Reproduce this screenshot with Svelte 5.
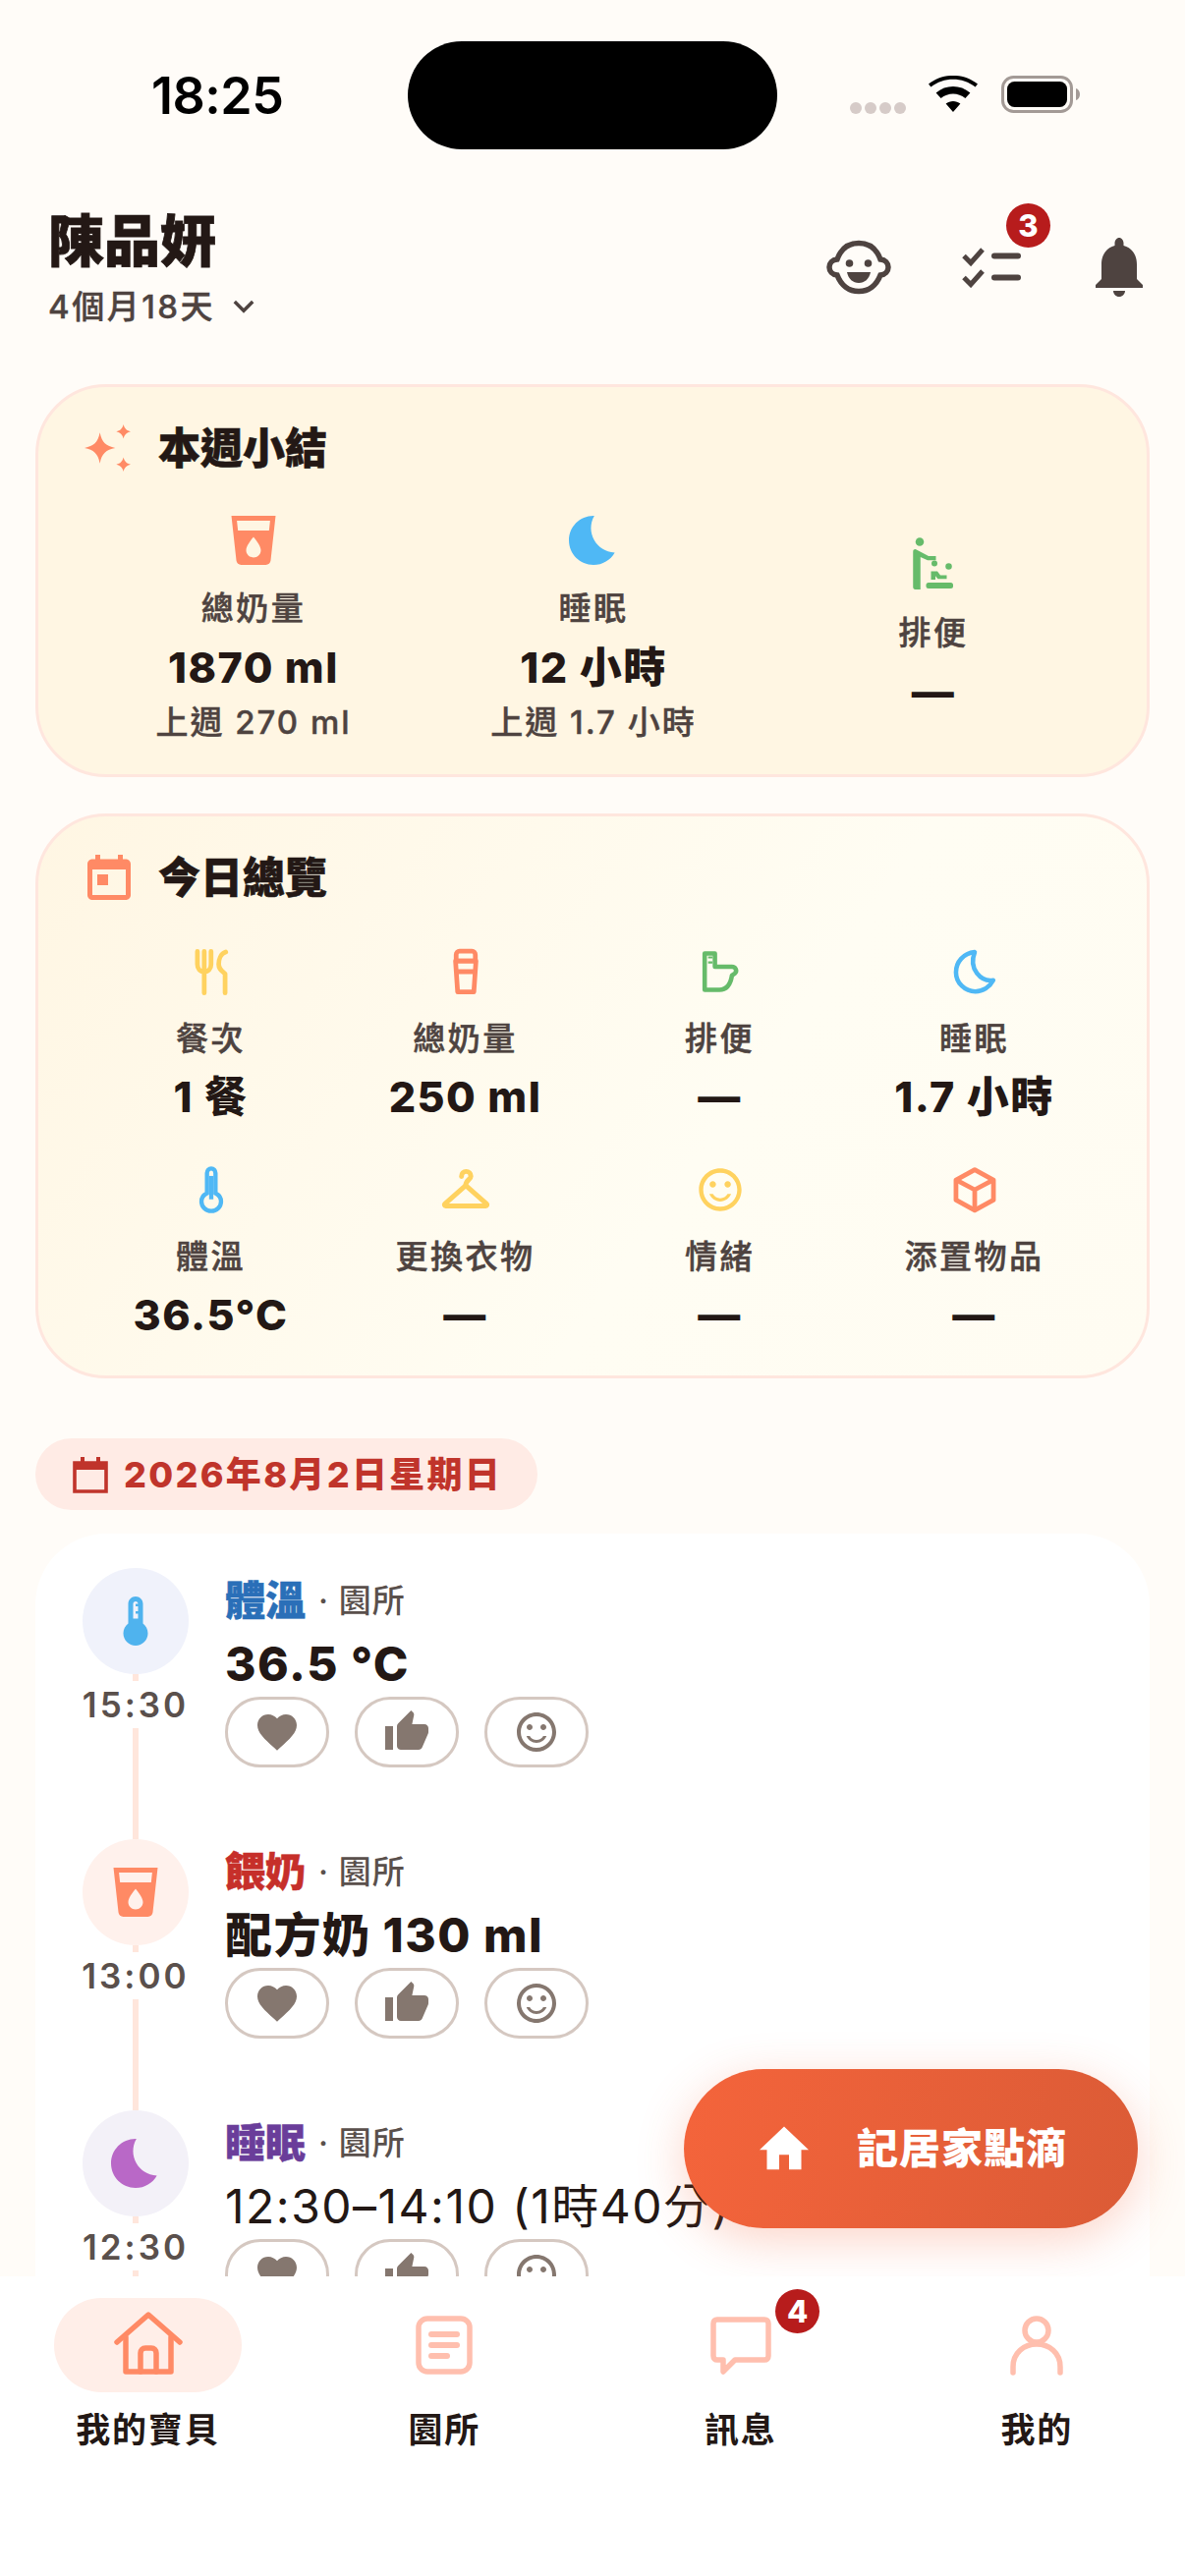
<script>
  const icons = {
    drink: 'M3 2l2.01 18.23C5.13 21.23 5.97 22 7 22h10c1.03 0 1.87-.77 1.99-1.77L21 2H3zm9 17c-1.66 0-3-1.34-3-3 0-2 3-5.4 3-5.4s3 3.4 3 5.4c0 1.66-1.34 3-3 3zm6.33-11H5.67l-.44-4h13.53l-.43 4z',
    moon: 'M12.34 2.02C6.59 1.82 2 6.42 2 12c0 5.52 4.48 10 10 10 3.71 0 6.93-2.02 8.66-5.02-7.51-.25-12.09-8.43-8.32-14.96z',
    thermo: 'M15 13V5c0-1.66-1.34-3-3-3S9 3.34 9 5v8c-1.21.91-2 2.37-2 4 0 2.76 2.24 5 5 5s5-2.24 5-5c0-1.63-.79-3.09-2-4zm-4-8c0-.55.45-1 1-1s1 .45 1 1h-1v1h1v2h-1v1h1v2h-2V5z',
    heart: 'M12 21.35l-1.45-1.32C5.4 15.36 2 12.28 2 8.5 2 5.42 4.42 3 7.5 3c1.74 0 3.41.81 4.5 2.09C13.09 3.81 14.76 3 16.5 3 19.58 3 22 5.42 22 8.5c0 3.78-3.4 6.86-8.55 11.54L12 21.35z',
    thumb: 'M1 21h4V9H1v12zm22-11c0-1.1-.9-2-2-2h-6.31l.95-4.57.03-.32c0-.41-.17-.79-.44-1.06L14.17 1 7.59 7.59C7.22 7.95 7 8.45 7 9v10c0 1.1.9 2 2 2h9c.83 0 1.54-.5 1.84-1.22l3.02-7.05c.09-.23.14-.47.14-.73v-2z'
  };
  const smileLine = 'M11.99 2C6.47 2 2 6.48 2 12s4.47 10 9.99 10C17.52 22 22 17.52 22 12S17.52 2 11.99 2zM12 20c-4.42 0-8-3.58-8-8s3.58-8 8-8 8 3.58 8 8-3.58 8-8 8zm3.5-9c.83 0 1.5-.67 1.5-1.5S16.33 8 15.5 8 14 8.67 14 9.5s.67 1.5 1.5 1.5zm-7 0c.83 0 1.5-.67 1.5-1.5S9.33 8 8.5 8 7 8.67 7 9.5 7.67 11 8.5 11zM12 16c-1.48 0-2.75-.81-3.45-2H6.88c.8 2.05 2.79 3.5 5.12 3.5s4.32-1.45 5.12-3.5h-1.67c-.7 1.19-1.97 2-3.45 2z';

  const weekly = [
    { icon: 'drink', color: '#ff8a65', label: '總奶量', value: '1870 ml', sub: '上週 270 ml' },
    { icon: 'moon', color: '#4fb8f5', label: '睡眠', value: '12 小時', sub: '上週 1.7 小時' },
    { icon: 'baby', color: '#66bb6a', label: '排便', value: '—' }
  ];
  const today = [
    { icon: 'fork', color: '#ffd25f', label: '餐次', value: '1 餐' },
    { icon: 'cup', color: '#ff8a65', label: '總奶量', value: '250 ml' },
    { icon: 'potty', color: '#66bb6a', label: '排便', value: '—' },
    { icon: 'moonline', color: '#4fb8f5', label: '睡眠', value: '1.7 小時' },
    { icon: 'therline', color: '#4fb8f5', label: '體溫', value: '36.5°C' },
    { icon: 'hanger', color: '#ffd25f', label: '更換衣物', value: '—' },
    { icon: 'mood', color: '#ffd25f', label: '情緒', value: '—' },
    { icon: 'box', color: '#ff8a65', label: '添置物品', value: '—' }
  ];
  const events = [
    { icon: 'thermo', bg: '#f0f2fb', fg: '#4fb3ee', tone: '#2a6fb8', title: '體溫', value: '36.5 °C', time: '15:30' },
    { icon: 'drink', bg: '#fff1ec', fg: '#ff8a65', tone: '#c62f2a', title: '餵奶', value: '配方奶 130 ml', time: '13:00' },
    { icon: 'moon', bg: '#f3f1f8', fg: '#b968c7', tone: '#6a3d9a', title: '睡眠', value: '12:30–14:10 (1時40分) — 安穩入睡', time: '12:30', plain: true }
  ];
  const tabs = [
    { id: 'home', label: '我的寶貝', active: true },
    { id: 'news', label: '園所' },
    { id: 'chat', label: '訊息', badge: 4 },
    { id: 'me', label: '我的' }
  ];
</script>

{#snippet glyph(name)}
  <svg class="ic" viewBox="0 0 24 24" aria-hidden="true">
    {#if name === 'baby'}
      <g fill="currentColor">
        <circle cx="6.4" cy="2.6" r="1.7"/>
        <path d="M4.7 5.6 10 8.4h3v1.7H9.6L6.7 8.8V22H4.6c-.6 0-.9-.4-.9-1V6.6c0-.7.4-1 1-1z"/>
        <circle cx="12.4" cy="11.4" r="1.2"/><circle cx="18.2" cy="12.6" r="1.3"/>
        <path d="M11 14.6h2.6l1.2 1.6h2.6v1.5h-3.6l-1-1.2V18H11z"/>
        <rect x="9" y="19.2" width="11" height="2.4" rx="1"/>
      </g>
    {:else if name === 'fork'}
      <g fill="none" stroke="currentColor" stroke-width="2.2" stroke-linecap="round" stroke-linejoin="round">
        <path d="M5.500 2.500v6c0 2 1.200 3.500 3.200 3.500s3.200-1.500 3.200-3.500v-6M8.700 2.500V22"/>
        <path d="M18.800 2.800c-2.400.8-3.300 3.600-3.300 5.700 0 2.200 1.300 3 3 4.500V22"/>
      </g>
    {:else if name === 'cup'}
      <g fill="none" stroke="currentColor" stroke-width="2.200" stroke-linejoin="round" stroke-linecap="round">
        <path d="M7.500 7V4c0-1 .7-1.600 1.600-1.600h5.800c.9 0 1.600.6 1.600 1.600v3z"/>
        <path d="M7.200 7h9.600l-1 14.500H8.200zM7.500 12h9"/>
      </g>
    {:else if name === 'potty'}
      <g fill="none" stroke="currentColor" stroke-width="2.100" stroke-linecap="round" stroke-linejoin="round">
        <path d="M4.700 3.500h4.800v6.200h8c1.700 0 2.600 1.900 1.400 3.100l-1.400 1c-.6 4-2.400 6.700-5.900 6.700H4.700z"/>
      </g>
      <path d="M6.300 5.300h2M6.300 7.700h2" fill="none" stroke="currentColor" stroke-width="1"/>
    {:else if name === 'moonline'}
      <path d="M12 2.800C6.700 3.400 3.200 7.400 3.200 12.300c0 5 4.200 9 9.100 9 3.500 0 6.700-2 8.400-5.300-5.700.9-11.800-5.200-8.700-13.200z" fill="none" stroke="currentColor" stroke-width="2.100" stroke-linejoin="round"/>
    {:else if name === 'therline'}
      <g fill="none" stroke="currentColor" stroke-width="2">
        <path d="M10 13.600V4.200c0-1.200.9-2.200 2-2.200s2 1 2 2.200v9.400c1.500.8 2.600 2.200 2.600 3.900 0 2.500-2.100 4.500-4.600 4.500s-4.600-2-4.600-4.500c0-1.700 1.100-3.100 2.600-3.900z"/>
        <path d="M12 5.500v11"/>
      </g>
    {:else if name === 'hanger'}
      <g fill="none" stroke="currentColor" stroke-width="2.300" stroke-linecap="round" stroke-linejoin="round">
        <path d="M10 5.800c0-1.400 1-2.400 2.200-2.400s2.200 1 2.200 2.200c0 1.400-2.400 2-2.400 4.200"/>
        <path d="M12 10 2.200 18.600c-.4.4-.2 1 .4 1h18.800c.6 0 .8-.6.4-1z"/>
      </g>
    {:else if name === 'mood'}
      <path fill="currentColor" d={smileLine}/>
    {:else if name === 'box'}
      <g fill="none" stroke="currentColor" stroke-width="2.200" stroke-linejoin="round">
        <path d="M12 2.600 20.800 7.400v9.400L12 21.600 3.200 16.800V7.400z"/>
        <path d="M3.400 7.400 12 12l8.600-4.600M12 12v9.400"/>
      </g>
    {:else}
      <path fill="currentColor" d={icons[name]}/>
    {/if}
  </svg>
{/snippet}

<div class="phone">
  <div class="status">
    <span class="clock">18:25</span>
    <div class="island"></div>
    <div class="sys">
      <div class="dots"><i></i><i></i><i></i><i></i></div>
      <svg class="wifi" viewBox="0 0 50 36" aria-hidden="true">
        <path d="M25 36 17.600 27.600c4.400-3.600 10.400-3.600 14.800 0zM12.600 22l-5-5.600c10-8.600 24.800-8.600 34.800 0l-5 5.600c-7.200-6-17.600-6-24.800 0zM2.400 10.600 0 7.600C14-4 36-4 50 7.600l-2.400 3c-13-10.600-32.200-10.600-45.200 0z"/>
      </svg>
      <svg class="batt" viewBox="0 0 80 38" aria-hidden="true">
        <rect x="1.500" y="1.500" width="70" height="35" rx="11" fill="none" stroke="#a39a96" stroke-width="3"/>
        <rect x="6" y="6" width="61" height="26" rx="7.500" fill="#000"/>
        <path d="M76 13c2.600.8 4 3 4 6s-1.400 5.200-4 6z" fill="#a39a96"/>
      </svg>
    </div>
  </div>

  <div class="main">
    <header class="top">
      <div>
        <h1>陳品妍</h1>
        <div class="age">4個月18天
          <svg class="chev" viewBox="0 0 24 24" aria-hidden="true"><path d="M5.500 8.500 12 15l6.500-6.500" fill="none" stroke="currentColor" stroke-width="2.400"/></svg>
        </div>
      </div>
      <div class="actions">
        <svg class="a-face" viewBox="0 0 66 56" aria-hidden="true">
          <path fill="none" stroke="#4e4340" stroke-width="5.500" d="M11 20C15 9 23 3.500 33 3.500S51 9 55 20c5 .5 8 4 8 8s-3 7.500-8 8c-4 10.500-12 16.500-22 16.500S15 46.500 11 36c-5-.5-8-4-8-8s3-7.500 8-8z"/>
          <circle cx="23.500" cy="24" r="3.800" fill="#4e4340"/><circle cx="42.500" cy="24" r="3.800" fill="#4e4340"/>
          <path fill="#4e4340" d="M21 33h24c-1.500 7-6 11-12 11s-10.500-4-12-11z"/>
        </svg>
        <div class="a-check">
          <svg viewBox="0 0 60 42" aria-hidden="true">
            <g fill="none" stroke="#4e4340" stroke-width="5">
              <path d="M2 9.500l7 7L21 3M2 31.500l7 7L21 25"/>
            </g>
            <rect x="30" y="6.500" width="30" height="6" rx="3" fill="#4e4340"/><rect x="30" y="28.500" width="30" height="6" rx="3" fill="#4e4340"/>
          </svg>
          <span class="badge">3</span>
        </div>
        <svg class="a-bell" viewBox="0 0 48 60" aria-hidden="true">
          <path fill="#4e4340" d="M24 60c3.300 0 6-2.700 6-6H18c0 3.300 2.700 6 6 6zM42 42V27c0-9.300-5-17-13.500-19V5.500C28.500 2.500 26.500 0 24 0s-4.500 2.500-4.500 5.500V8C11 10 6 17.700 6 27v15l-6 6v3h48v-3z"/>
        </svg>
      </div>
    </header>

    <section class="card weekly">
      <div class="card-head">
        <svg class="h-ic" viewBox="0 0 46 46" aria-hidden="true">
          <g fill="#ff8a65">
            <path d="M15 8C17 18 21 21 30 23 21 25 17 28 15 38 13 28 9 25 0 23 9 21 13 18 15 8z"/>
            <path d="M38 0c1 4 3 6 7 7-4 1-6 3-7 7-1-4-3-6-7-7 4-1 6-3 7-7zM38 32c1 4 3 6 7 7-4 1-6 3-7 7-1-4-3-6-7-7 4-1 6-3 7-7z"/>
          </g>
        </svg>
        <h2>本週小結</h2>
      </div>
      <div class="w-grid">
        {#each weekly as w}
          <div class="w-col" style:color={w.color}>
            {@render glyph(w.icon)}
            <div class="lab">{w.label}</div>
            <div class="val">{w.value}</div>
            {#if w.sub}<div class="sub">{w.sub}</div>{/if}
          </div>
        {/each}
      </div>
    </section>

    <section class="card overview">
      <div class="card-head">
        <svg class="h-ic cal" viewBox="0 0 44 46" aria-hidden="true">
          <path fill="#ff8a65" d="M39 4.500h-3V0h-5v4.500H13V0H8v4.500H5c-2.800 0-5 2.200-5 5V41c0 2.800 2.200 5 5 5h34c2.800 0 5-2.200 5-5V9.500c0-2.800-2.200-5-5-5zM39 41H5V15h34zM10 20h11v11H10z"/>
        </svg>
        <h2>今日總覽</h2>
      </div>
      <div class="o-grid">
        {#each today as t}
          <div class="o-cell" style:color={t.color}>
            {@render glyph(t.icon)}
            <div class="lab">{t.label}</div>
            <div class="val">{t.value}</div>
          </div>
        {/each}
      </div>
    </section>

    <div class="date">
      <svg viewBox="0 0 36 38" aria-hidden="true">
        <path fill="none" stroke="#c0342b" stroke-width="3.600" d="M2 7h32v29H2z"/>
        <path fill="#c0342b" d="M2 7h32v7H2zM8 1h4v7H8zM24 1h4v7h-4z"/>
      </svg>
      <span>2026年8月2日星期日</span>
    </div>

    <section class="timeline">
      {#each events as e}
        <article class="ev">
          <div class="rail">
            <div class="bub" style:background={e.bg} style:color={e.fg}>
              {@render glyph(e.icon)}
            </div>
            <div class="stem tiny"></div>
            <div class="time">{e.time}</div>
            <div class="stem grow"></div>
          </div>
          <div class="body">
            <div class="ev-title"><b style:color={e.tone}>{e.title}</b><span>· 園所</span></div>
            <div class="ev-val" class:plain={e.plain}>{e.value}</div>
            <div class="reacts">
              <button aria-label="喜愛"><svg viewBox="0 0 24 24"><path fill="#85776f" d={icons.heart}/></svg></button>
              <button aria-label="讚"><svg viewBox="0 0 24 24"><path fill="#85776f" d={icons.thumb}/></svg></button>
              <button aria-label="笑臉"><svg viewBox="0 0 24 24"><path fill="#85776f" d={smileLine}/></svg></button>
            </div>
          </div>
        </article>
      {/each}
    </section>
  </div>

  <button class="fab">
    <svg viewBox="0 0 24 24" aria-hidden="true"><path fill="#fff" d="M10 20.500v-6h4v6h5v-8h3L12 3 2 12.500h3v8z"/></svg>
    <span>記居家點滴</span>
  </button>

  <nav class="tabs">
    {#each tabs as t}
      <div class="tab" class:active={t.active}>
        <div class="tab-ic">
          {#if t.id === 'home'}
            <svg viewBox="0 0 72 72" aria-hidden="true"><g fill="none" stroke="#ff8a65" stroke-width="5.500" stroke-linejoin="round" stroke-linecap="round"><path d="M4 33 36 5l32 28"/><path d="M13 28v35h46V28"/><path d="M28 63V44c0-3 2-5 5-5h6c3 0 5 2 5 5v19"/></g></svg>
          {:else if t.id === 'news'}
            <svg viewBox="0 0 72 72" aria-hidden="true"><g fill="none" stroke="#ffbfae" stroke-width="5.500"><rect x="10" y="9" width="52" height="54" rx="9"/></g><g fill="#ffbfae"><rect x="20" y="22" width="32" height="6" rx="3"/><rect x="20" y="33" width="32" height="6" rx="3"/><rect x="20" y="44" width="22" height="6" rx="3"/></g></svg>
          {:else if t.id === 'chat'}
            <svg viewBox="0 0 72 72" aria-hidden="true"><path fill="none" stroke="#ffbfae" stroke-width="5.500" stroke-linejoin="round" d="M8 14c0-2.500 1.500-4 4-4h48c2.500 0 4 1.500 4 4v33c0 2.500-1.500 4-4 4H30L18 63V51h-6c-2.500 0-4-1.500-4-4z"/></svg>
          {:else}
            <svg viewBox="0 0 72 72" aria-hidden="true"><g fill="none" stroke="#ffbfae" stroke-width="5.500" stroke-linecap="round"><circle cx="36" cy="21" r="12"/><path d="M12 64V58c0-14 11-23 24-23s24 9 24 23v6"/></g></svg>
          {/if}
          {#if t.badge}<span class="badge">{t.badge}</span>{/if}
        </div>
        <div class="tab-lab">{t.label}</div>
      </div>
    {/each}
  </nav>
</div>

<style>
  :global(body) { margin: 0; background: #fffcf8; }
  .phone {
    width: 1206px; height: 2622px; position: relative; overflow: hidden;
    display: flex; flex-direction: column; background: #fffcf8; color: #231815;
    font-family: Inter, "Noto Sans CJK TC", sans-serif;
  }
  .status { height: 162px; flex: none; position: relative; }
  .clock { position: absolute; left: 154px; top: 68px; font: 600 52px/60px Inter, sans-serif; color: #000; letter-spacing: -.5px; }
  .island { position: absolute; left: 415px; top: 42px; width: 376px; height: 110px; border-radius: 55px; background: #000; }
  .sys { position: absolute; left: 865px; top: 77px; display: flex; align-items: flex-start; }
  .dots { display: flex; gap: 3px; margin-top: 27px; width: 80px; }
  .dots i { width: 12px; height: 12px; border-radius: 50%; background: #d6cbc8; }
  .wifi { width: 50px; height: 38px; }
  .batt { width: 80px; height: 38px; margin-left: 24px; }

  .main { flex: 1; min-height: 0; overflow: hidden; padding: 0 36px; display: flex; flex-direction: column; }
  .top { display: flex; justify-content: space-between; align-items: flex-start; padding: 48px 7px 0 13px; height: 229px; box-sizing: border-box; flex: none; }
  h1 { margin: 0; font: 900 57px/72px Inter, "Noto Sans CJK TC", sans-serif; color: #231815; -webkit-text-stroke: .8px; }
  .age { font: 500 33px/44px Inter, "Noto Sans CJK TC", sans-serif; color: #4e4340; letter-spacing: 2.500px; display: flex; align-items: center; gap: 8px; margin-top: 8px; -webkit-text-stroke: .4px; }
  .chev { width: 34px; height: 34px; color: #4e4340; margin-left: 4px; }
  .actions { display: flex; align-items: center; position: relative; margin-top: 32px; }
  .a-face { width: 66px; height: 56px; }
  .a-check { width: 60px; height: 42px; margin-left: 72px; position: relative; }
  .a-check svg { width: 60px; height: 42px; display: block; }
  .a-check .badge { right: -30px; top: -44px; }
  .a-bell { width: 48px; height: 60px; margin-left: 76px; }
  .badge {
    position: absolute; width: 45px; height: 45px; border-radius: 50%;
    background: #b71c1c; color: #fff; font: 800 31px/45px Inter, sans-serif; text-align: center;
  }

  .card { border: 3px solid #ffe6de; border-radius: 72px; box-sizing: border-box; padding: 37px 47px 0; flex: none; }
  .weekly { height: 400px; background: #fff6e3; }
  .overview { height: 575px; margin-top: 37px; background: linear-gradient(125deg, #fff6e3, #fffdf3 60%, #fffcf2); }
  .card-head { display: flex; align-items: center; gap: 27px; height: 50px; }
  .h-ic { width: 48px; height: 50px; flex: none; }
  .h-ic.cal { width: 44px; height: 46px; margin: 0 1px 0 3px; }
  h2 { margin: 0; font: 900 43px/50px Inter, "Noto Sans CJK TC", sans-serif; color: #231815; -webkit-text-stroke: .6px; }
  .ic { display: block; width: 60px; height: 60px; }

  .w-grid { display: grid; grid-template-columns: repeat(3, 346px); margin: 37px 0 0 -1px; height: 240px; }
  .w-col { display: flex; flex-direction: column; align-items: center; justify-content: center; }
  .lab { font: 500 33px/44px Inter, "Noto Sans CJK TC", sans-serif; color: #4e4340; letter-spacing: 2.500px; margin-top: 17px; white-space: nowrap; -webkit-text-stroke: .5px; }
  .val { font: 800 43px/56px Inter, "Noto Sans CJK TC", sans-serif; color: #231815; letter-spacing: 1.500px; margin-top: 10px; white-space: nowrap; }
  .sub { font: 500 33px/42px Inter, "Noto Sans CJK TC", sans-serif; color: #4e4340; letter-spacing: 2px; margin-top: 7px; white-space: nowrap; -webkit-text-stroke: .4px; }

  .o-grid { display: grid; grid-template-columns: repeat(4, 259px); grid-auto-rows: 222px; margin: 45px 0 0 -1px; }
  .o-cell { display: flex; flex-direction: column; align-items: center; }
  .o-cell .lab { margin-top: 20px; }
  .o-cell .val { margin-top: 9px; }
  .o-cell .ic { width: 52px; height: 52px; }

  .date {
    align-self: flex-start; flex: none; margin-top: 61px; height: 73px; width: 511px; box-sizing: border-box;
    border-radius: 37px; background: #ffebe5; display: flex; align-items: center; padding-left: 38px; gap: 16px;
  }
  .date svg { width: 36px; height: 38px; }
  .date span { font: 800 36px/44px Inter, "Noto Sans CJK TC", sans-serif; color: #c0342b; letter-spacing: 2.300px; white-space: nowrap; }

  .timeline { flex: none; margin-top: 24px; background: #fff; border-radius: 72px 72px 0 0; padding: 35px 0 0 48px; height: 900px; }
  .ev { display: flex; height: 276px; }
  .rail { width: 108px; display: flex; flex-direction: column; align-items: center; flex: none; }
  .stem { width: 6px; background: #ffe6dc; }
  .stem.tiny { height: 7px; flex: none; }
  .stem.grow { flex: 1; }
  .bub { width: 108px; height: 108px; border-radius: 50%; display: flex; align-items: center; justify-content: center; flex: none; }
  .time { font: 600 35px/48px Inter, sans-serif; letter-spacing: 3px; color: #5a504c; white-space: nowrap; }
  .body { margin-left: 37px; min-width: 0; }
  .ev-title { display: flex; align-items: center; height: 48px; margin-top: 9px; white-space: nowrap; }
  .ev-title b { font: 900 41px/48px Inter, "Noto Sans CJK TC", sans-serif; -webkit-text-stroke: .5px; }
  .ev-title span { font: 500 33px/48px Inter, "Noto Sans CJK TC", sans-serif; color: #5a504c; margin-left: 13px; letter-spacing: 1px; }
  .ev-val { font: 800 48px/64px Inter, "Noto Sans CJK TC", sans-serif; color: #231815; letter-spacing: 1.500px; margin-top: 9px; white-space: nowrap; }
  .ev-val.plain { font-weight: 400; }
  .reacts { display: flex; gap: 26px; margin-top: 1px; }
  .reacts button { width: 106px; height: 72px; border: 3px solid #d5c8c1; border-radius: 36px; background: #fff; padding: 0; display: flex; align-items: center; justify-content: center; box-sizing: border-box; }
  .reacts svg { width: 48px; height: 48px; }

  .fab {
    position: absolute; left: 696px; top: 2106px; width: 462px; height: 162px; border: 0; border-radius: 81px;
    background: linear-gradient(100deg, #f4643b, #db5b36); box-shadow: 0 12px 48px rgba(244, 100, 59, .28);
    display: flex; align-items: center; padding: 0 0 0 72px; gap: 44px; box-sizing: border-box;
  }
  .fab svg { width: 60px; height: 60px; }
  .fab span { font: 800 42px/56px Inter, "Noto Sans CJK TC", sans-serif; color: #fff; letter-spacing: 1px; white-space: nowrap; }

  .tabs { position: relative; flex: none; height: 305px; background: #fff; display: grid; grid-template-columns: repeat(4, 1fr); }
  .tab { display: flex; flex-direction: column; align-items: center; padding-top: 22px; }
  .tab-ic { width: 191px; height: 96px; border-radius: 48px; display: flex; align-items: center; justify-content: center; position: relative; }
  .active .tab-ic { background: #ffeee8; }
  .tab-ic svg { width: 72px; height: 72px; }
  .tab-ic .badge { right: 15px; top: -9px; }
  .tab-lab { font: 700 35px/44px Inter, "Noto Sans CJK TC", sans-serif; color: #231815; margin-top: 16px; letter-spacing: 1.800px; }
</style>
